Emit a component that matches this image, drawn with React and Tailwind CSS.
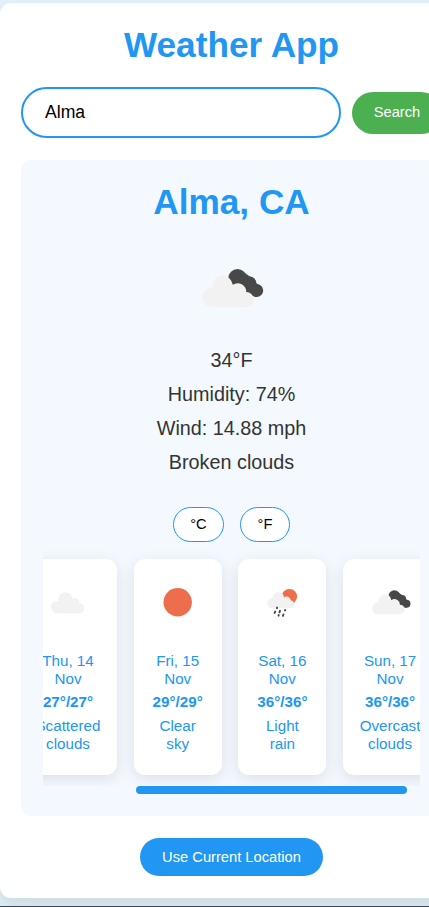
const CloudShape = () => (
  <path
    fill="#f2f2f2"
    d="M9.5 38.2 A9.6 9.6 0 0 1 0.3 28.5 A9.6 9.6 0 0 1 10.4 19 A11 11 0 0 1 21 6.2 A11.5 11.5 0 0 1 30.8 15.8 A8.5 8.5 0 0 1 44.2 23 A8 8 0 0 1 52 30.5 A7.8 7.8 0 0 1 44.5 38.2Z"
  />
);

const BrokenClouds = ({ className }) => (
  <svg className={className} viewBox="0 0 62 39">
    <g fill="#484849">
      <circle cx="35.5" cy="9.3" r="9.2" />
      <circle cx="48" cy="13.8" r="6.2" />
      <circle cx="54.7" cy="21.5" r="6.5" />
      <path d="M29 12 L40 2 L50 9 L57 17 L54 27.9 L44 25Z" />
    </g>
    <CloudShape />
  </svg>
);

const ScatteredClouds = () => (
  <svg className="h-[50px] w-[50px]" viewBox="0 0 50 50" fill="#f2f2f2">
    <circle cx="14.2" cy="30.1" r="6.2" />
    <circle cx="22.3" cy="22.3" r="7" />
    <circle cx="32.2" cy="25.5" r="4.2" />
    <circle cx="36.2" cy="31.4" r="5" />
    <path d="M14 24 L27 20 L34 24 L36 27 V36.4 H14Z" />
  </svg>
);

const ClearSky = () => (
  <svg className="h-[50px] w-[50px]" viewBox="0 0 50 50">
    <circle cx="24.7" cy="25.3" r="14.2" fill="#ec6e4c" />
  </svg>
);

const LightRain = () => (
  <svg className="h-[50px] w-[50px]" viewBox="0 0 50 50">
    <circle cx="32.4" cy="19.6" r="7.7" fill="#ec6e4c" />
    <g fill="#f2f2f2">
      <circle cx="15.5" cy="26.2" r="5.2" />
      <circle cx="21.2" cy="20.6" r="5.7" />
      <circle cx="29.5" cy="23.6" r="4.2" />
      <circle cx="33" cy="27.2" r="4" />
      <path d="M15 22 L26 20 L33 24 V31.3 H15Z" />
    </g>
    <g stroke="#484849" strokeWidth="1.9" strokeLinecap="round">
      <path d="M20.1 30.6 L19.9 31.2 M18.2 34.6 L17.6 36 M23 33.6 L22.5 35.4 M28.2 33 L28 33.4 M21.8 38 L21.5 38.7 M26.5 37.4 L25.9 38.8" />
    </g>
  </svg>
);

const days = [
  { date: ["Thu, 14", "Nov"], temp: "27°/27°", text: ["Scattered", "clouds"], width: "w-[98px]", icon: <ScatteredClouds /> },
  { date: ["Fri, 15", "Nov"], temp: "29°/29°", text: ["Clear", "sky"], width: "w-[88px]", icon: <ClearSky /> },
  { date: ["Sat, 16", "Nov"], temp: "36°/36°", text: ["Light", "rain"], width: "w-[88px]", icon: <LightRain /> },
  {
    date: ["Sun, 17", "Nov"],
    temp: "36°/36°",
    text: ["Overcast", "clouds"],
    width: "w-[94px]",
    icon: (
      <div className="flex h-[50px] w-[50px] items-center justify-center">
        <BrokenClouds className="ml-[2px] h-[25px] w-[39px] shrink-0" />
      </div>
    ),
  },
];

const Lines = ({ lines }) => lines.map((line) => <div key={line} className="whitespace-nowrap">{line}</div>);

const DayCard = ({ day }) => (
  <div
    className={`flex h-[216px] shrink-0 flex-col items-center rounded-[11px] bg-white pt-[18px] text-center text-[15.2px] leading-[18px] shadow-[0_4px_16px_rgba(0,0,0,0.1)] ${day.width}`}
  >
    {day.icon}
    <div className="mt-[25px]"><Lines lines={day.date} /></div>
    <div className="mt-[5px] font-bold">{day.temp}</div>
    <div className="mt-[6px]"><Lines lines={day.text} /></div>
  </div>
);

export default function App() {
  return (
    <div className="h-[907px] w-full overflow-hidden border-b border-[#3b4453] bg-[#e3f2fa] pt-[3px] font-['Liberation_Sans',Arial,sans-serif] text-[#333]">
      <div className="flex h-[895px] w-[463px] flex-col items-center rounded-[11px] bg-white px-[21px] shadow-[0_9px_18px_rgba(0,0,0,0.1)]">
        <h1 className="mt-[21px] text-[35.2px] leading-[42px] font-bold text-[#2196f3]">Weather App</h1>

        <div className="mt-[21px] flex w-full items-center gap-[11px]">
          <input
            className="h-[51px] w-[320px] shrink-0 rounded-full border-2 border-[#2196f3] bg-white px-[22px] text-[17.6px] text-black outline-none"
            defaultValue="Alma"
          />
          <button className="h-[42px] w-[90px] shrink-0 rounded-full bg-[#4caf50] text-[14.7px] text-white">Search</button>
        </div>

        <section className="mt-[22px] flex h-[656px] w-full flex-col items-center rounded-[11px] bg-[#f3f9fe] px-[22px]">
          <h2 className="mt-[21px] text-[35.2px] leading-[42px] font-bold text-[#2196f3]">Alma, CA</h2>
          <BrokenClouds className="mt-[46px] ml-[2px] h-[39px] w-[62px]" />
          <div className="mt-[35px] text-center text-[19.8px] leading-[34px]">
            <p>34°F</p>
            <p>Humidity: 74%</p>
            <p>Wind: 14.88 mph</p>
            <p>Broken clouds</p>
          </div>
          <div className="mt-[28px] flex gap-4 text-[14.7px] text-black">
            <button className="h-[35px] w-[51px] rounded-full border border-[#2196f3] bg-white">°C</button>
            <button className="h-[35px] w-[50px] rounded-full border border-[#2196f3] bg-white">°F</button>
          </div>
          <div className="mt-[6px] flex h-[238px] w-full gap-[16.7px] overflow-hidden pt-[11px] text-[#2196f3]">
            {days.map((day, i) => (
              <div key={day.date[0]} className={i === 0 ? "-ml-[24px]" : ""}>
                <DayCard day={day} />
              </div>
            ))}
          </div>
          <div className="w-full pl-[93px]">
            <div className="h-2 w-[271px] rounded-full bg-[#2196f3]" />
          </div>
        </section>

        <button className="mt-[22px] h-[38px] w-[183px] rounded-full bg-[#2196f3] text-[14.7px] text-white">
          Use Current Location
        </button>
      </div>
    </div>
  );
}
